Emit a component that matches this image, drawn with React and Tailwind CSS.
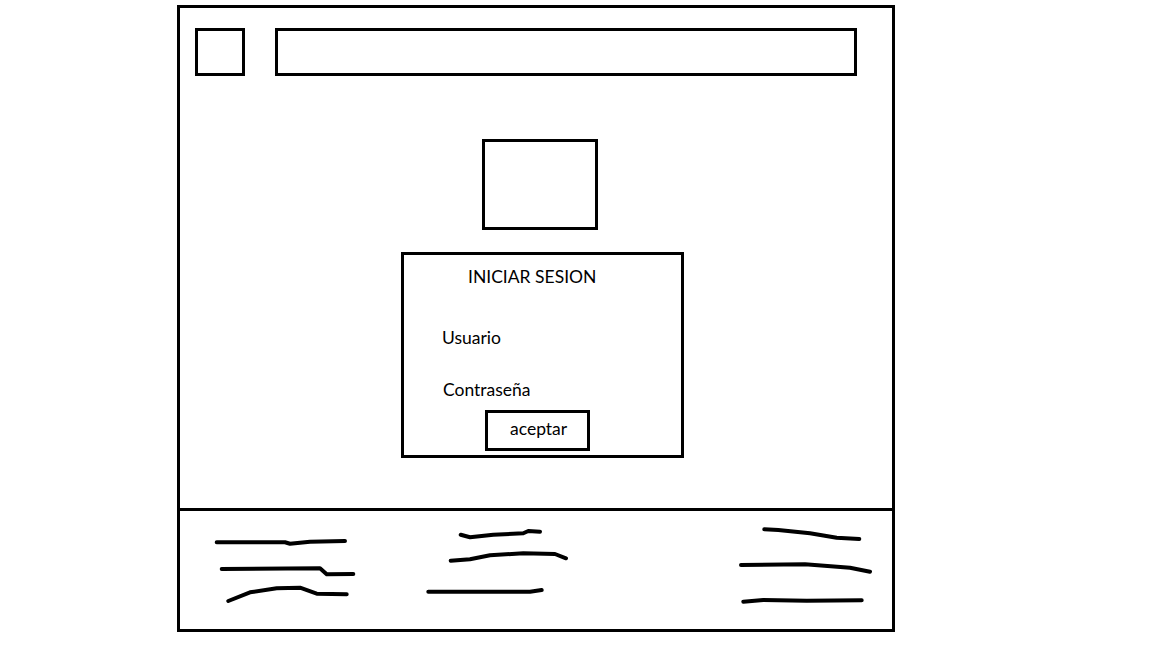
import React from "react";

// Wireframe: login page sketch (header, logo box, login card, footer scribbles)

const FONT = { fontFamily: "Lato, 'Open Sans', sans-serif" };

function Scribble({ width, lines }) {
  return (
    <svg width={width} height="80" viewBox={`0 0 ${width} 80`} className="block shrink-0">
      {lines.map((pts, i) => (
        <polyline
          key={i}
          points={pts}
          fill="none"
          stroke="#000"
          strokeWidth="4"
          strokeLinecap="round"
          strokeLinejoin="round"
        />
      ))}
    </svg>
  );
}

const COL1 = [
  "2.7,15.3 71,15.3 76,16.7 96,14.7 131,14",
  "7.7,42 106,41.3 112.7,47.3 139.3,47",
  "14.3,74 36,65.3 62.7,61.3 86,60.7 102.7,66.7 132.7,67.3",
];
const COL2 = [
  "34.7,7.7 44,10.3 67.3,7.7 97.3,6.3 102.3,4 114,4.7",
  "24.7,33.7 44,32.3 64,28.3 97.3,26.3 129,27 140,31.3",
  "2.3,64.7 104,64.7 115.7,63",
];
const COL3 = [
  "25.3,2.3 39.3,3 71,6.3 97.7,10.7 120.3,12",
  "2,38 66,37.3 111,40.7 131,44.7",
  "4.3,74.7 24.3,73 67.7,73.7 122.7,73.3",
];

export default function App() {
  return (
    <div className="min-h-screen w-full bg-white pt-[5px]" style={FONT}>
      <div className="ml-[177px] flex h-[627px] w-[718px] flex-col border-[3px] border-black">
        {/* top section */}
        <div className="h-[500px] shrink-0">
          <header className="flex items-start pt-[20px] pl-[15px]">
            <div className="h-[48px] w-[50px] border-[3px] border-black" />
            <div className="ml-[30px] h-[48px] w-[582px] border-[3px] border-black" />
          </header>

          <div className="ml-[302px] mt-[63px] h-[91px] w-[116px] border-[3px] border-black" />

          <div className="ml-[221px] mt-[22px] flex h-[206px] w-[283px] flex-col border-[3px] border-black text-[17.5px] text-black">
            <div className="ml-[64px] mt-[12px] h-[20px] leading-[20px]">INICIAR SESION</div>
            <div className="ml-[38px] mt-[41px] h-[20px] leading-[20px]">Usuario</div>
            <div className="ml-[39px] mt-[32px] h-[20px] leading-[20px]">Contraseña</div>
            <button className="ml-[81px] mt-[10px] flex h-[41px] w-[105px] items-start border-[3px] border-black bg-white pl-[22px] pt-[6px] text-[17.5px]">
              <span className="block leading-[20px]">aceptar</span>
            </button>
          </div>
        </div>

        {/* footer */}
        <footer className="flex flex-1 items-start border-t-[3px] border-black pl-[34px] pt-[16px]">
          <Scribble width={142} lines={COL1} />
          <div className="ml-[70px]">
            <Scribble width={143} lines={COL2} />
          </div>
          <div className="ml-[170px]">
            <Scribble width={134} lines={COL3} />
          </div>
        </footer>
      </div>
    </div>
  );
}
